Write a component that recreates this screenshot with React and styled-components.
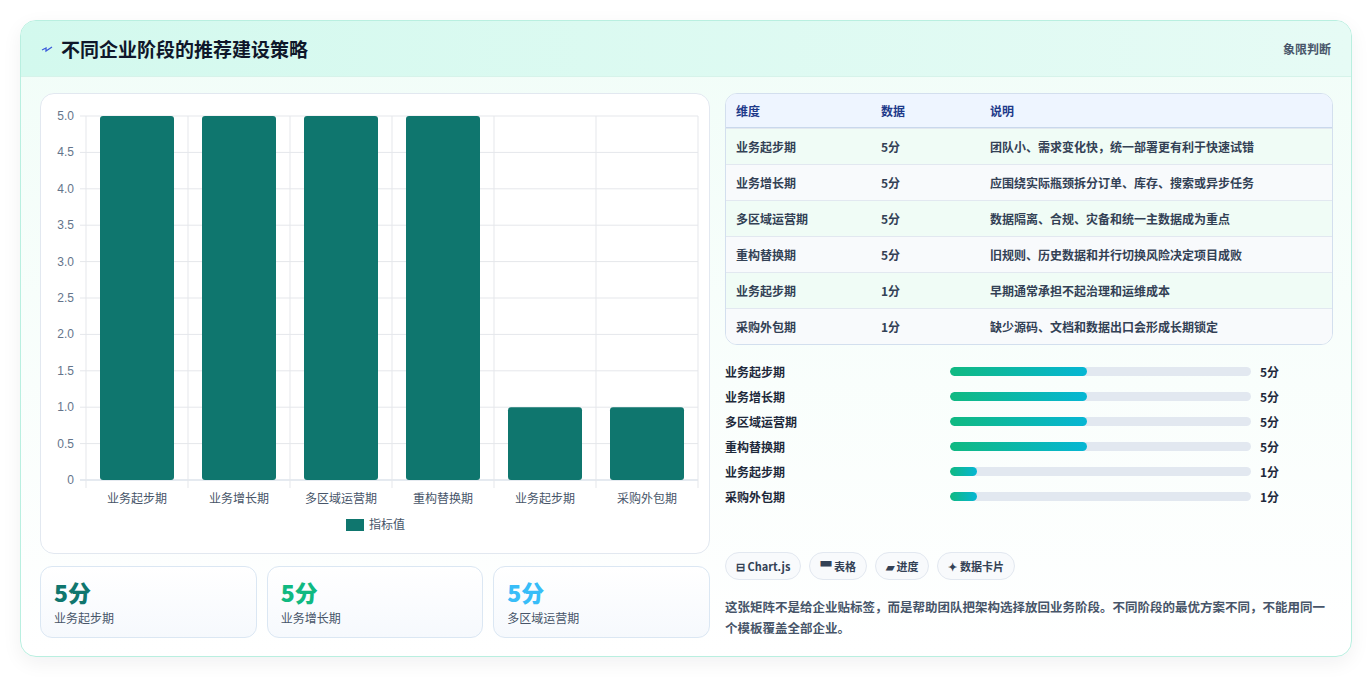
import styled, { createGlobalStyle } from "styled-components";

const Global = createGlobalStyle`
  body { margin: 0; background: #fff; font-family: "Noto Sans CJK SC", "Noto Sans", sans-serif; }
`;

const Page = styled.div`
  padding: 20px 20px 20px 20px;
`;

const Card = styled.div`
  border: 1px solid #b9efe0;
  border-radius: 16px;
  overflow: hidden;
  background: linear-gradient(180deg, #f1fdf8 0%, #ffffff 100%);
  box-shadow: 0 6px 20px rgba(15, 23, 42, 0.06);
`;

const Header = styled.div`
  height: 55px;
  display: flex;
  align-items: center;
  justify-content: space-between;
  padding: 0 20px;
  background: linear-gradient(90deg, #d3f9ee 0%, #e6fbf5 100%);
  border-bottom: 1px solid #d6f3ea;
`;

const Title = styled.h2`
  margin: 0;
  font-size: 19px;
  font-weight: 700;
  color: #0f172a;
  display: flex;
  align-items: center;
  gap: 8px;
`;

const Tag = styled.span`
  font-size: 12px;
  color: #475569;
  font-weight: 600;
`;

const Body = styled.div`
  display: grid;
  grid-template-columns: 670px 608px;
  gap: 15px;
  padding: 16px 18px 18px 19px;
`;

const Col = styled.div`
  display: flex;
  flex-direction: column;
  gap: ${(p) => p.$gap || 12}px;
`;

const ChartCard = styled.div`
  height: 461px;
  background: #fff;
  border: 1px solid #e2e8f0;
  border-radius: 14px;
  box-sizing: border-box;
`;

const Stats = styled.div`
  display: grid;
  grid-template-columns: repeat(3, 1fr);
  gap: 10px;
`;

const Stat = styled.div`
  height: 72px;
  box-sizing: border-box;
  border: 1px solid #dbe7f3;
  border-radius: 12px;
  background: linear-gradient(180deg, #ffffff, #f6f9fd);
  padding: 10px 13px;
`;

const StatValue = styled.div`
  font-size: 23px;
  font-weight: 800;
  line-height: 30px;
  color: ${(p) => p.$color};
`;

const StatLabel = styled.div`
  font-size: 12px;
  color: #475569;
  margin-top: 2px;
`;

const Table = styled.div`
  border: 1px solid #d3dfee;
  border-radius: 12px;
  overflow: hidden;
  background: #fff;
`;

const Row = styled.div`
  display: grid;
  grid-template-columns: 145px 109px 1fr;
  align-items: center;
  height: ${(p) => (p.$head ? 33 : 35)}px;
  padding-left: 10px;
  font-size: 12px;
  font-weight: 600;
  color: ${(p) => (p.$head ? "#1e3a8a" : "#334155")};
  background: ${(p) => (p.$head ? "#eef5ff" : p.$odd ? "#f0fcf6" : "#f8fafc")};
  border-top: ${(p) => (p.$head ? "none" : "1px solid #e2e8f0")};
  border-bottom: ${(p) => (p.$head ? "1px solid #c9d8ec" : "none")};
`;

const Bars = styled.div`
  display: flex;
  flex-direction: column;
  gap: 8px;
  margin-top: 6px;
`;

const BarRow = styled.div`
  display: grid;
  grid-template-columns: 225px 310px 1fr;
  align-items: center;
  gap: 0;
  height: 17px;
  font-size: 12px;
  font-weight: 600;
  color: #1e293b;
`;

const Track = styled.div`
  height: 9px;
  border-radius: 5px;
  background: #e2e8f0;
  overflow: hidden;
  margin-right: 9px;
`;

const Fill = styled.div`
  height: 100%;
  border-radius: 5px;
  background: linear-gradient(90deg, #10b981, #06b6d4);
`;

const Chips = styled.div`
  display: flex;
  gap: 8px;
  margin-top: auto;
`;

const Chip = styled.span`
  height: 28px;
  box-sizing: border-box;
  padding: 0 10px;
  display: inline-flex;
  align-items: center;
  gap: 3px;
  border: 1px solid #e2e8f0;
  border-radius: 14px;
  background: #f8fafc;
  font-size: 11px;
  font-weight: 700;
  color: #334155;
`;

const Note = styled.p`
  margin: 4px 0 0;
  font-size: 12.5px;
  line-height: 21px;
  font-weight: 600;
  color: #475569;
`;

const rows = [
  ["业务起步期", 5, "团队小、需求变化快，统一部署更有利于快速试错"],
  ["业务增长期", 5, "应围绕实际瓶颈拆分订单、库存、搜索或异步任务"],
  ["多区域运营期", 5, "数据隔离、合规、灾备和统一主数据成为重点"],
  ["重构替换期", 5, "旧规则、历史数据和并行切换风险决定项目成败"],
  ["业务起步期", 1, "早期通常承担不起治理和运维成本"],
  ["采购外包期", 1, "缺少源码、文档和数据出口会形成长期锁定"],
];

function Chart() {
  const x0 = 45, y0 = 22, w = 612, h = 364;
  const ticks = [0, 0.5, 1, 1.5, 2, 2.5, 3, 3.5, 4, 4.5, 5];
  const cw = w / 6;
  return (
    <svg width="670" height="461" style={{ display: "block" }}>
      {ticks.map((t) => {
        const y = y0 + h - (t / 5) * h;
        return (
          <g key={t}>
            <line x1={x0 - 6} x2={x0 + w} y1={y} y2={y} stroke={t === 0 ? "#cbd5e1" : "#e5e7eb"} />
            <text x={x0 - 12} y={y + 4} fontSize="12" fill="#64748b" textAnchor="end" fontFamily="Liberation Sans, sans-serif">
              {t === 0 ? "0" : t.toFixed(1)}
            </text>
          </g>
        );
      })}
      {Array.from({ length: 7 }).map((_, i) => (
        <line key={i} x1={x0 + i * cw} x2={x0 + i * cw} y1={y0} y2={y0 + h + 8} stroke="#e5e7eb" />
      ))}
      {rows.map((r, i) => {
        const bh = (r[1] / 5) * h;
        return (
          <g key={i}>
            <rect x={x0 + i * cw + 14} y={y0 + h - bh} width={74} height={bh} rx="3" fill="#0f766e" />
            <text x={x0 + i * cw + cw / 2} y={y0 + h + 23} fontSize="12" fill="#475569" textAnchor="middle">
              {r[0]}
            </text>
          </g>
        );
      })}
      <rect x="305" y="425" width="18" height="12" fill="#0f766e" />
      <text x="328" y="435" fontSize="12" fill="#475569">指标值</text>
    </svg>
  );
}

export default function App() {
  return (
    <Page>
      <Global />
      <Card>
        <Header>
          <Title>
            <svg width="12" height="12" viewBox="0 0 12 12">
              <path d="M1 7 L5 5 L5 8 L11 4" stroke="#3b5bdb" strokeWidth="1.3" fill="none" />
            </svg>
            不同企业阶段的推荐建设策略
          </Title>
          <Tag>象限判断</Tag>
        </Header>
        <Body>
          <Col>
            <ChartCard>
              <Chart />
            </ChartCard>
            <Stats>
              <Stat>
                <StatValue $color="#0f766e">5分</StatValue>
                <StatLabel>业务起步期</StatLabel>
              </Stat>
              <Stat>
                <StatValue $color="#10b981">5分</StatValue>
                <StatLabel>业务增长期</StatLabel>
              </Stat>
              <Stat>
                <StatValue $color="#38bdf8">5分</StatValue>
                <StatLabel>多区域运营期</StatLabel>
              </Stat>
            </Stats>
          </Col>
          <Col $gap={0}>
            <Table>
              <Row $head>
                <span>维度</span>
                <span>数据</span>
                <span>说明</span>
              </Row>
              {rows.map((r, i) => (
                <Row key={i} $odd={i % 2 === 0}>
                  <span>{r[0]}</span>
                  <span>{r[1]}分</span>
                  <span>{r[2]}</span>
                </Row>
              ))}
            </Table>
            <Bars>
              {rows.map((r, i) => (
                <BarRow key={i}>
                  <span>{r[0]}</span>
                  <Track>
                    <Fill style={{ width: `${r[1] === 5 ? 45.5 : 9}%` }} />
                  </Track>
                  <span>{r[1]}分</span>
                </BarRow>
              ))}
            </Bars>
            <Chips>
              <Chip>⊟ Chart.js</Chip>
              <Chip>▀ 表格</Chip>
              <Chip>▰ 进度</Chip>
              <Chip>✦ 数据卡片</Chip>
            </Chips>
            <Note>
              这张矩阵不是给企业贴标签，而是帮助团队把架构选择放回业务阶段。不同阶段的最优方案不同，不能用同一个模板覆盖全部企业。
            </Note>
          </Col>
        </Body>
      </Card>
    </Page>
  );
}
